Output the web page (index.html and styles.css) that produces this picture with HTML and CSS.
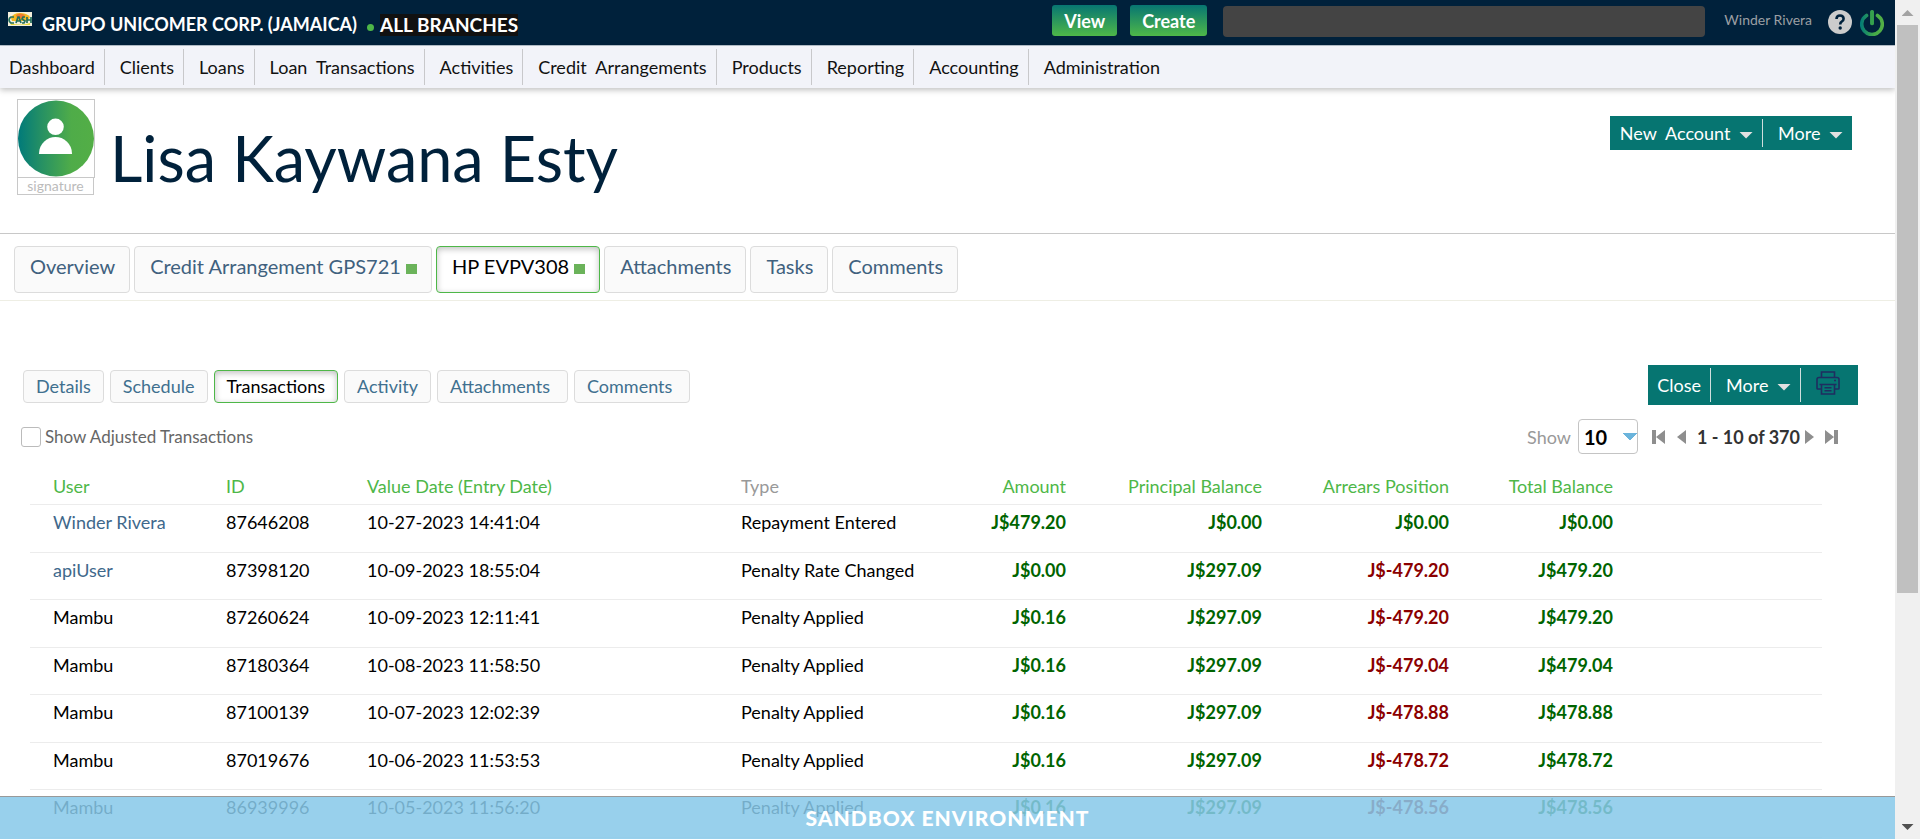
FILE: index.html
```html
<!DOCTYPE html>
<html lang="en">
<head>
<meta charset="utf-8">
<title>Lisa Kaywana Esty - Transactions</title>
<link rel="stylesheet" href="styles.css">
</head>
<body>
<div class="page">
  <header class="topbar">
    <svg class="logo" viewBox="0 0 24 14" aria-hidden="true">
      <rect width="24" height="14" fill="#f4f0dc"/>
      <path d="M3 6Q5 1 12 1t10 4l-2 4H4z" fill="#f5b921"/>
      <path d="M8 3Q12 0 17 3l-2 3H9z" fill="#ee7b30"/>
      <path d="M2 11q10 3 20 0v2H3z" fill="#e8d83a"/>
      <path d="M6 5H3Q1 6 1 8t2 3h3M8 11l2-6h1l2 6M9 9h3M17 5h-2l-1 2 3 2-1 2h-2M19 5v6M23 5v6M19 8h4" fill="none" stroke="#24705c" stroke-width="1.7"/>
    </svg>
    <span class="company">GRUPO UNICOMER CORP. (JAMAICA)</span>
    <span class="dot"></span>
    <span class="branch">ALL BRANCHES</span>
    <div class="tools">
      <button class="pill" type="button">View</button>
      <button class="pill" type="button">Create</button>
      <input class="search" type="search" aria-label="Search">
      <a class="account" href="#">Winder Rivera</a>
      <button class="icon-button" type="button" aria-label="Help">
        <svg width="24" height="24" viewBox="0 0 24 24"><circle cx="12" cy="12" r="12" fill="#ccc"/><path d="M8.5 9Q8.500 5.500 12 5.500T15.600 8.800Q15.600 10.800 13.700 11.700Q12.200 12.500 12.200 14.500" fill="none" stroke="#00213b" stroke-width="2.600"/><circle cx="12.200" cy="18" r="1.700" fill="#00213b"/></svg>
      </button>
      <button class="icon-button" type="button" aria-label="Log out">
        <svg width="24" height="26" viewBox="0 0 24 26"><defs><linearGradient id="pw" x1="0" x2="24" y1="0" y2="0" gradientUnits="userSpaceOnUse"><stop stop-color="#007a78"/><stop offset=".6" stop-color="#45aa48"/><stop offset="1" stop-color="#55b045"/></linearGradient></defs><path d="M6.500 5.500A10.300 10.300 0 1 0 17.500 5.500M12 1.800V13.500" fill="none" stroke="url(#pw)" stroke-width="3.600" stroke-linecap="round"/><path d="M12.100 2V13.500" stroke="#35a04d" stroke-width="3.600" stroke-linecap="round"/></svg>
      </button>
    </div>
  </header>
  <nav class="menu" aria-label="Main">
    <a href="#">Dashboard</a><a href="#">Clients</a><a href="#">Loans</a><a href="#">Loan  Transactions</a><a href="#">Activities</a><a href="#">Credit  Arrangements</a><a href="#">Products</a><a href="#">Reporting</a><a href="#">Accounting</a><a href="#">Administration</a>
  </nav>

  <section class="client">
    <div class="portrait">
      <svg class="avatar" viewBox="0 0 78 78" aria-label="Client photo"><defs><linearGradient id="av"><stop stop-color="#007a7a"/><stop offset=".3" stop-color="#259064"/><stop offset=".7" stop-color="#4fac49"/><stop offset="1" stop-color="#53ae46"/></linearGradient></defs><circle cx="39" cy="39" r="39" fill="url(#av)"/><circle cx="38.500" cy="27" r="8.500" fill="#fff"/><path d="M21.500 55Q21.500 47 27 42Q32 37.500 38.500 37.500T50 42Q55.500 47 55.500 55Z" fill="#fff"/></svg>
      <div class="signature">signature</div>
    </div>
    <h1>Lisa Kaywana Esty</h1>
    <div class="actions client-actions">
      <button type="button">New  Account <span class="caret"></span></button>
      <button type="button">More <span class="caret"></span></button>
    </div>
  </section>

  <nav class="tabs" aria-label="Client sections">
    <a href="#">Overview</a>
    <a href="#">Credit Arrangement GPS721 <i class="state"></i></a>
    <a class="active" href="#">HP EVPV308 <i class="state"></i></a>
    <a href="#">Attachments</a>
    <a href="#">Tasks</a>
    <a href="#">Comments</a>
  </nav>

  <div class="subbar">
    <nav class="subtabs" aria-label="Account sections">
      <a href="#">Details</a>
      <a href="#">Schedule</a>
      <a class="active" href="#">Transactions</a>
      <a href="#">Activity</a>
      <a class="roomy" href="#">Attachments</a>
      <a class="roomy" href="#">Comments</a>
    </nav>
    <div class="actions account-actions">
      <button type="button">Close</button>
      <button type="button">More <span class="caret"></span></button>
      <button type="button" class="print" aria-label="Print">
        <svg width="24" height="24" viewBox="0 0 24 24" fill="none" stroke="#1f2d60" stroke-width="1.600"><path d="M5.500 6V1H18.500V6M5 18H1.800Q1 18 1 17.200V8.500Q1 6.500 3 6.500H21Q23 6.500 23 8.500V17.200Q23 18 22.200 18H19M3.500 13.500H20.500M5.500 13.500V23H18.500V13.500M8.500 16.800H15.500M8.500 19.800H15.500M18 9.500H20"/></svg>
      </button>
    </div>
  </div>

  <div class="filters">
    <label class="adjusted"><input type="checkbox"><span>Show Adjusted Transactions</span></label>
    <div class="pager">
      <label class="show" for="size">Show</label>
      <select id="size"><option>10</option></select>
      <button type="button" aria-label="First page"><svg width="14" height="14" viewBox="0 0 14 14"><path d="M0 0H4V14H0zM13 0V14L4 7z"/></svg></button>
      <button type="button" aria-label="Previous page"><svg width="9" height="14" viewBox="0 0 9 14"><path d="M9 0V14L0 7z"/></svg></button>
      <span class="range">1 - 10 of 370</span>
      <button type="button" aria-label="Next page"><svg width="9" height="14" viewBox="0 0 9 14"><path d="M0 0V14L9 7z"/></svg></button>
      <button type="button" aria-label="Last page"><svg width="14" height="14" viewBox="0 0 14 14"><path d="M13 0H9V14H13zM0 0V14L9 7z"/></svg></button>
    </div>
  </div>

  <div class="table-wrap">
  <table>
    <colgroup><col class="c-user"><col class="c-id"><col class="c-date"><col class="c-type"><col class="c-amount"><col class="c-principal"><col class="c-arrears"><col class="c-total"><col></colgroup>
    <thead><tr><th>User</th><th>ID</th><th>Value Date (Entry Date)</th><th class="plain">Type</th><th class="num">Amount</th><th class="num">Principal Balance</th><th class="num">Arrears Position</th><th class="num">Total Balance</th><th></th></tr></thead>
    <tbody>
      <tr><td><a href="#">Winder Rivera</a></td><td>87646208</td><td>10-27-2023 14:41:04</td><td>Repayment Entered</td><td class="num">J$479.20</td><td class="num">J$0.00</td><td class="num">J$0.00</td><td class="num">J$0.00</td><td></td></tr>
      <tr><td><a href="#">apiUser</a></td><td>87398120</td><td>10-09-2023 18:55:04</td><td>Penalty Rate Changed</td><td class="num">J$0.00</td><td class="num">J$297.09</td><td class="num neg">J$-479.20</td><td class="num">J$479.20</td><td></td></tr>
      <tr><td>Mambu</td><td>87260624</td><td>10-09-2023 12:11:41</td><td>Penalty Applied</td><td class="num">J$0.16</td><td class="num">J$297.09</td><td class="num neg">J$-479.20</td><td class="num">J$479.20</td><td></td></tr>
      <tr><td>Mambu</td><td>87180364</td><td>10-08-2023 11:58:50</td><td>Penalty Applied</td><td class="num">J$0.16</td><td class="num">J$297.09</td><td class="num neg">J$-479.04</td><td class="num">J$479.04</td><td></td></tr>
      <tr><td>Mambu</td><td>87100139</td><td>10-07-2023 12:02:39</td><td>Penalty Applied</td><td class="num">J$0.16</td><td class="num">J$297.09</td><td class="num neg">J$-478.88</td><td class="num">J$478.88</td><td></td></tr>
      <tr><td>Mambu</td><td>87019676</td><td>10-06-2023 11:53:53</td><td>Penalty Applied</td><td class="num">J$0.16</td><td class="num">J$297.09</td><td class="num neg">J$-478.72</td><td class="num">J$478.72</td><td></td></tr>
      <tr><td>Mambu</td><td>86939996</td><td>10-05-2023 11:56:20</td><td>Penalty Applied</td><td class="num">J$0.16</td><td class="num">J$297.09</td><td class="num neg">J$-478.56</td><td class="num">J$478.56</td><td></td></tr>
    </tbody>
  </table>
  </div>
  <div class="environment">SANDBOX ENVIRONMENT</div>
</div>
<div class="scrollbar" aria-hidden="true"><span class="arrow up"></span><span class="track"><span class="thumb"></span></span><span class="arrow down"></span></div>
</body>
</html>
```
FILE: styles.css
```css
* { box-sizing: border-box; }
body {
  margin: 0;
  height: 100vh;
  display: flex;
  overflow: hidden;
  background: #fff;
  color: #000;
  font: 18px/24px Lato, "Liberation Sans", sans-serif;
}
a { color: inherit; text-decoration: none; }
button { font: inherit; color: inherit; border: 0; padding: 0; background: none; cursor: pointer; }
svg { display: block; }

.page { flex: 1; min-width: 0; position: relative; overflow: hidden; }

/* Top bar */
.topbar {
  display: flex;
  align-items: flex-start;
  height: 46px;
  padding-left: 8px;
  background: #00213b;
  border-bottom: 1px solid #b9c4cf;
  color: #fff;
}
.logo { width: 24px; height: 14px; margin: 12px 10px 0 0; }
.company { margin-top: 12px; font-weight: 700; font-size: 18px; white-space: nowrap; }
.dot { width: 7px; height: 7px; border-radius: 50%; margin: 24px 6px 0 10px; background: #4eb748; }
.branch { margin-top: 14px; line-height: 22px; background: #111; font-weight: 700; font-size: 19px; white-space: nowrap; }
.tools { display: flex; align-items: flex-start; margin-left: auto; padding: 5px 11px 0 0; }
.pill {
  height: 31px;
  padding: 0 12px;
  margin-right: 13px;
  border-radius: 3px;
  background: linear-gradient(#077672, #4eb748);
  font-weight: 700;
  font-size: 18px;
}
.search { width: 482px; height: 31px; margin: 1px 19px 0 3px; border: 0; border-radius: 4px; background: #444; color: #fff; }
.account { margin: 3px 16px 0 0; font-size: 14px; color: #9b9fa3; white-space: nowrap; }
.icon-button { margin: 5px 8px 0 0; }
.icon-button:last-child { margin-right: 0; }

/* Main menu */
.menu { display: flex; padding: 3px 0; background: #f2f3f9; box-shadow: 0 2px 6px rgba(0, 0, 0, .25); }
.menu a { padding: 6px 9px 6px 15px; border-right: 1px solid #c8c8cb; white-space: pre; color: #111; }
.menu a:first-child { padding-left: 9px; }
.menu a:last-child { border-right: 0; }

/* Client heading */
.client { display: flex; align-items: flex-start; height: 146px; padding: 11px 43px 0 17px; border-bottom: 1px solid #c8c8c8; }
.portrait { width: 78px; margin-right: 15px; }
.avatar { width: 78px; height: 79px; border: 1px solid #c8c8c8; }
.signature { width: 77px; height: 17px; border: 1px solid #c8c8c8; border-top: 0; font-size: 14px; line-height: 16px; text-align: center; color: #bbb; }
h1 { margin: 20px 0 0; font-weight: 400; font-size: 63px; line-height: 78px; color: #00213b; white-space: nowrap; }

/* Action groups */
.actions { display: flex; margin-left: auto; background: #067571; color: #fff; }
.actions button { display: flex; align-items: center; white-space: pre; }
.actions button + button { border-left: 1px solid #d0dedd; }
.caret { flex: none; width: 14px; height: 7px; background: #e1e1e1; clip-path: polygon(0 0, 100% 0, 50% 100%); margin-top: 4px; }
.client-actions { margin-top: 17px; padding: 3px 0; }
.client-actions button { height: 28px; padding: 0 9px 0 10px; gap: 4px; }
.client-actions button + button { padding-left: 15px; }
.account-actions { padding: 3px 0; }
.account-actions button { height: 34px; padding: 0 9px; gap: 4px; }
.account-actions button + button { padding-left: 15px; }
.account-actions .print { align-items: flex-start; padding: 3px 18px 0 15px; }

/* Client tabs */
.tabs { display: flex; gap: 4px; padding: 12px 14px 7px; border-bottom: 1px solid #eeeee4; }
.tabs a, .subtabs a { border: 1px solid #dcdcdc; border-radius: 4px; background: #fafafa; white-space: nowrap; }
.tabs a { height: 47px; padding: 7px 14px 0 15px; font-size: 20px; color: #40617e; }
.subtabs a { height: 33px; padding: 3px 12px; color: #40708f; }
.subtabs .roomy { padding-right: 17px; }
.tabs .active, .subtabs .active { border: 1px solid #4eb748; background: #fff; color: #000; box-shadow: inset 0 2px 6px rgba(0, 0, 0, .25); }
.state { display: inline-block; width: 11px; height: 10px; background: #6bb35a; }

/* Account tabs */
.subbar { display: flex; align-items: flex-start; padding: 64px 37px 0 23px; }
.subtabs { display: flex; gap: 6px; padding-top: 5px; }

/* Filters and pager */
.filters { display: flex; justify-content: space-between; align-items: center; padding: 14px 56px 0 21px; }
.adjusted { display: flex; align-items: center; gap: 4px; font-size: 17px; color: #666; }
.adjusted input { appearance: none; width: 20px; height: 20px; margin: 0; border: 1px solid #bbb; border-radius: 3px; background: #fff; }
.pager { display: flex; align-items: center; }
.show { color: #999; margin-right: 7px; }
select {
  appearance: none;
  width: 60px;
  height: 35px;
  margin-right: 14px;
  padding: 0 5px;
  border: 1px solid #c4c4c4;
  border-radius: 4px;
  background:
    linear-gradient(to top right, transparent 50%, #6bb4dc 50%) no-repeat right 7px top 13px / 7px 8px,
    linear-gradient(to top left, transparent 50%, #6bb4dc 50%) no-repeat right 0 top 13px / 7px 8px,
    #fff;
  font: 700 20px/24px Lato, sans-serif;
  color: #000;
}
.pager svg { fill: #8e8e8e; }
.pager button { margin-right: 11px; }
.range { font-weight: 700; color: #333; margin-right: 5px; white-space: nowrap; }
.pager button:last-child { margin-right: 0; }

/* Transactions */
.table-wrap { padding: 12px 73px 0 30px; }
table { width: 100%; table-layout: fixed; border-collapse: collapse; }
.c-user { width: 196px; }
.c-id { width: 141px; }
.c-date { width: 374px; }
.c-type { width: 178px; }
.c-amount { width: 147px; }
.c-principal { width: 196px; }
.c-arrears { width: 187px; }
.c-total { width: 164px; }
th, td { padding: 0; text-align: left; vertical-align: top; white-space: nowrap; border-bottom: 1px solid #ececec; }
th { height: 38px; padding: 8px 0 0; font-weight: 400; color: #4eb748; }
td { height: 48px; padding-top: 5px; }
tbody tr:nth-child(even) td { height: 47px; }
th:first-child, td:first-child { padding-left: 23px; }
th.plain { color: #999; }
td a { color: #40688b; }
th.num, td.num { text-align: right; }
td.num { font-weight: 700; color: #006400; }
td.neg { color: #8b0000; }

/* Environment banner, over the page */
.environment {
  position: absolute;
  left: 0;
  right: 0;
  bottom: 0;
  height: 43px;
  border-top: 1px solid #999;
  background: rgba(135, 200, 233, .86);
  color: #fff;
  font-weight: 900;
  font-size: 21px;
  line-height: 42px;
  letter-spacing: 1px;
  text-align: center;
}

/* Scrollbar */
.scrollbar { width: 25px; flex: none; display: flex; flex-direction: column; align-items: center; background: #f0f0f0; }
.track { flex: 1; width: 21px; }
.thumb { display: block; height: 72%; background: #c0c0c0; }
.arrow { width: 12px; height: 6px; margin: 10px 0 9px; background: #a3a3a3; clip-path: polygon(50% 0, 100% 100%, 0 100%); }
.down { background: #505050; clip-path: polygon(0 0, 100% 0, 50% 100%); }
```
